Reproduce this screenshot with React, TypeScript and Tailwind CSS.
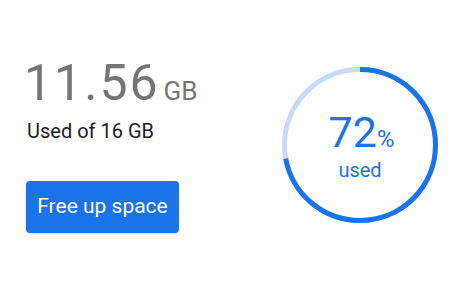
const USED = 11.56;
const TOTAL = 16;

function UsageRing({ percent }: { percent: number }) {
  const r = 75.5;
  const c = 2 * Math.PI * r;
  return (
    <div className="relative w-[156px] h-[156px]">
      <svg width="156" height="156" viewBox="0 0 156 156" className="-rotate-90">
        <circle cx="78" cy="78" r={r} fill="none" stroke="#c6dafc" strokeWidth="5" />
        <circle
          cx="78"
          cy="78"
          r={r}
          fill="none"
          stroke="#1a73e8"
          strokeWidth="5"
          strokeDasharray={`${(c * percent) / 100} ${c}`}
        />
      </svg>
      <div className="absolute inset-0 flex flex-col items-center justify-center text-[#1a73e8]">
        <div className="flex items-baseline leading-none ml-[3px]">
          <span className="text-[43px]">{percent}</span>
          <span className="text-[24px]">%</span>
        </div>
        <span className="text-[20px] leading-none mt-[6px]">used</span>
      </div>
    </div>
  );
}

export default function App() {
  const percent = Math.round((USED / TOTAL) * 100);

  return (
    <div className="w-[464px] h-[290px] bg-white flex items-center font-['Roboto',sans-serif]">
      <div className="self-start pt-[58px] pl-[24px] flex flex-col items-start">
        <div className="flex items-baseline text-[#757575] leading-none">
          <span className="text-[50px] tracking-[2px]">{USED}</span>
          <span className="text-[26px] ml-[4px]">GB</span>
        </div>
        <p className="text-[20px] text-[#202124] leading-none mt-[13px] pl-[3px]">
          Used of {TOTAL} GB
        </p>
        <button className="mt-[40px] ml-[2px] w-[153px] h-[52px] rounded-[4px] bg-[#1a73e8] text-white text-[21px] shadow-sm">
          Free up space
        </button>
      </div>
      <div className="ml-auto mr-[26px]">
        <UsageRing percent={percent} />
      </div>
    </div>
  );
}
